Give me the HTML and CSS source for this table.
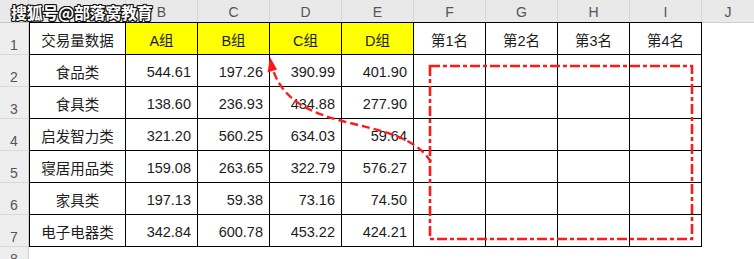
FILE: index.html
```html
<!DOCTYPE html>
<html lang="zh">
<head>
<meta charset="utf-8">
<title>交易量数据</title>
<link rel="stylesheet" href="styles.css">
</head>
<body>
<div class="sheet">
  <div class="row head">
    <div class="corner"></div>
    <div class="col">A</div><div class="col">B</div><div class="col">C</div><div class="col">D</div><div class="col">E</div>
    <div class="col">F</div><div class="col">G</div><div class="col">H</div><div class="col">I</div><div class="col last">J</div>
  </div>

  <div class="row first">
    <div class="rh">1</div>
    <div class="c a">交易量数据</div>
    <div class="c ctr yellow">A组</div><div class="c ctr yellow">B组</div><div class="c ctr yellow">C组</div><div class="c ctr yellow">D组</div>
    <div class="c ctr">第1名</div><div class="c ctr">第2名</div><div class="c ctr">第3名</div><div class="c ctr">第4名</div>
    <div class="j"></div>
  </div>

  <div class="row">
    <div class="rh">2</div>
    <div class="c a">食品类</div>
    <div class="c num">544.61</div><div class="c num">197.26</div><div class="c num">390.99</div><div class="c num">401.90</div>
    <div class="c"></div><div class="c"></div><div class="c"></div><div class="c"></div><div class="j"></div>
  </div>
  <div class="row">
    <div class="rh">3</div>
    <div class="c a">食具类</div>
    <div class="c num">138.60</div><div class="c num">236.93</div><div class="c num">434.88</div><div class="c num">277.90</div>
    <div class="c"></div><div class="c"></div><div class="c"></div><div class="c"></div><div class="j"></div>
  </div>
  <div class="row">
    <div class="rh">4</div>
    <div class="c a">启发智力类</div>
    <div class="c num">321.20</div><div class="c num">560.25</div><div class="c num">634.03</div><div class="c num">59.64</div>
    <div class="c"></div><div class="c"></div><div class="c"></div><div class="c"></div><div class="j"></div>
  </div>
  <div class="row">
    <div class="rh">5</div>
    <div class="c a">寝居用品类</div>
    <div class="c num">159.08</div><div class="c num">263.65</div><div class="c num">322.79</div><div class="c num">576.27</div>
    <div class="c"></div><div class="c"></div><div class="c"></div><div class="c"></div><div class="j"></div>
  </div>
  <div class="row">
    <div class="rh">6</div>
    <div class="c a">家具类</div>
    <div class="c num">197.13</div><div class="c num">59.38</div><div class="c num">73.16</div><div class="c num">74.50</div>
    <div class="c"></div><div class="c"></div><div class="c"></div><div class="c"></div><div class="j"></div>
  </div>
  <div class="row">
    <div class="rh">7</div>
    <div class="c a">电子电器类</div>
    <div class="c num">342.84</div><div class="c num">600.78</div><div class="c num">453.22</div><div class="c num">424.21</div>
    <div class="c"></div><div class="c"></div><div class="c"></div><div class="c"></div><div class="j"></div>
  </div>
  <div class="row tail">
    <div class="rh">8</div>
  </div>

  <div class="watermark">搜狐号@部落窝教育</div>

  <svg class="overlay" width="754" height="259" viewBox="0 0 754 259" aria-hidden="true">
    <rect x="430" y="66" width="262" height="173" fill="none" stroke="#ff1a1a" stroke-width="2.6" stroke-dasharray="10 3 4 3"/>
    <path d="M431 162 C 400 112 296 138 273 70" fill="none" stroke="#ff1a1a" stroke-width="2.4" stroke-dasharray="8 4"/>
    <polygon points="270,57 267.5,72.5 277,69.5" fill="#ff1a1a"/>
  </svg>
</div>
</body>
</html>
```

FILE: styles.css
```css
* { box-sizing: border-box; }

html, body {
  margin: 0;
  padding: 0;
  background: #ffffff;
}

body {
  font-family: "Liberation Sans", "Noto Sans CJK SC", sans-serif;
  font-size: 14.5px;
  color: #1c1c1c;
}

.sheet {
  position: relative;
  width: 754px;
  height: 259px;
  overflow: hidden;
}

.row {
  display: grid;
  grid-template-columns: 29px 97px repeat(8, 72px) 1fr;
  height: 32px;
}

.row.first { height: 33px; }

.row.head {
  height: 22px;
  background: #e9e9e9;
  color: #555555;
  font-size: 14px;
}

.row.tail { height: 13px; }

.corner {
  border-right: 1px solid #d2d2d2;
}

.col {
  display: flex;
  align-items: center;
  justify-content: center;
  border-right: 1px solid #d6d6d6;
  padding-top: 1px;
}

.col.last { border-right: none; }

.rh {
  background: #eeeeee;
  color: #555555;
  font-size: 14px;
  display: flex;
  align-items: flex-end;
  justify-content: center;
  padding-bottom: 1px;
  border-bottom: 1px solid #d9d9d9;
  border-right: 1px solid #d0d0d0;
}

.first .rh { border-top: 1px solid #c8c8c8; }

.tail .rh {
  border-bottom: none;
  align-items: flex-start;
  padding-top: 4px;
}

.c {
  display: flex;
  align-items: center;
  border-right: 1px solid #000000;
  border-bottom: 1px solid #000000;
  padding-top: 2px;
  white-space: nowrap;
}

.first .c { border-top: 1px solid #000000; }

.c.a {
  border-left: 1px solid #000000;
  justify-content: center;
}

.c.ctr { justify-content: center; }

.c.num {
  justify-content: flex-end;
  padding-right: 6px;
}

.c.yellow { background: #ffff00; }

.first .j { border-top: 1px solid #d0d0d0; }

.watermark {
  position: absolute;
  left: 11px;
  top: 2px;
  font-family: "Noto Sans CJK SC", sans-serif;
  font-weight: 700;
  font-size: 16px;
  line-height: 20px;
  color: #ffffff;
  letter-spacing: -0.3px;
  text-shadow:
    -1px -1px 0 #111, 1px -1px 0 #111, -1px 1px 0 #111, 1px 1px 0 #111,
    0 -1px 0 #111, 0 1px 0 #111, -1px 0 0 #111, 1px 0 0 #111;
}

.overlay {
  position: absolute;
  left: 0;
  top: 0;
  pointer-events: none;
}
```
